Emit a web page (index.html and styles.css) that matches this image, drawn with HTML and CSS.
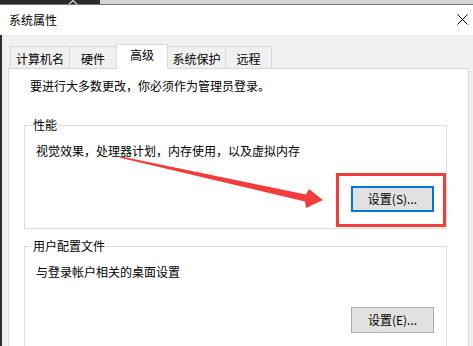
FILE: index.html
```html
<!DOCTYPE html>
<html lang="zh-CN">
<head>
<meta charset="utf-8">
<link rel="stylesheet" href="styles.css">
</head>
<body>
<div class="screen">
  <div class="topstrip">
    <div class="topstrip-dark">
      <svg class="chevron" width="14" height="6" viewBox="0 0 14 6"><polyline points="1,6 7,0.5 13,6" fill="none" stroke="#ddd" stroke-width="1.2"/></svg>
    </div>
    <div class="topstrip-light"></div>
  </div>
  <div class="titlebar">
    <span class="title">系统属性</span>
    <svg class="close" width="11" height="11" viewBox="0 0 11 11"><path d="M0.5 0.5 L10.5 10.5 M10.5 0.5 L0.5 10.5" stroke="#000" stroke-width="1"/></svg>
  </div>
  <div class="dialog">
    <div class="tabs">
      <div class="tab tab-name">计算机名</div>
      <div class="tab tab-hw">硬件</div>
      <div class="tab tab-adv active">高级</div>
      <div class="tab tab-prot">系统保护</div>
      <div class="tab tab-remote">远程</div>
    </div>
    <div class="panel">
      <p class="note">要进行大多数更改，你必须作为管理员登录。</p>
      <fieldset class="group">
        <legend class="group-label">性能</legend>
        <p class="group-text">视觉效果，处理器计划，内存使用，以及虚拟内存</p>
        <div class="btn-row"><button class="btn btn-focus">设置(S)...</button></div>
      </fieldset>
      <fieldset class="group group-profile">
        <legend class="group-label">用户配置文件</legend>
        <p class="group-text">与登录帐户相关的桌面设置</p>
        <div class="btn-row"><button class="btn">设置(E)...</button></div>
      </fieldset>
    </div>
  </div>
  <div class="highlight"></div>
  <svg class="arrow" width="473" height="346" viewBox="0 0 473 346">
    <polygon points="119,156 306,194.5 309,189 323,200 306,208 305,201.5 120,157.8" fill="#f23d3d"/>
  </svg>
</div>
</body>
</html>
```
FILE: styles.css
```css
html, body {
  margin: 0;
  padding: 0;
  background: #f0f0f0;
}
.screen {
  position: relative;
  width: 473px;
  height: 346px;
  overflow: hidden;
  font-family: "Noto Sans CJK SC", "Microsoft YaHei", sans-serif;
  font-size: 12px;
  line-height: 16px;
  color: #000;
  display: flex;
  flex-direction: column;
}
.topstrip {
  display: flex;
  height: 4px;
  border-bottom: 1px solid #7a7a7a;
  flex-shrink: 0;
}
.topstrip-dark {
  width: 100px;
  background: #2b2b2b;
  display: flex;
  align-items: flex-end;
  padding-left: 66px;
  box-sizing: border-box;
  overflow: hidden;
}
.chevron { display: block; margin-bottom: -2px; }
.topstrip-light {
  flex: 1;
  background: #d4d4d4;
}
.titlebar {
  height: 30px;
  background: #fff;
  display: flex;
  align-items: center;
  justify-content: space-between;
  padding: 0 5px 0 9px;
  flex-shrink: 0;
}
.title { margin-top: -1px; }
.close { display: block; margin-top: -1px; }
.dialog {
  flex: 1;
  background: #f0f0f0;
  border-left: 2px solid #2f2f2f;
  padding: 9px 4px 0 6px;
  display: flex;
  flex-direction: column;
}
.tabs {
  display: flex;
  align-items: flex-end;
  height: 24px;
  margin-left: 2px;
  position: relative;
  z-index: 1;
}
.tab {
  height: 22px;
  box-sizing: border-box;
  border: 1px solid #d9d9d9;
  border-bottom: none;
  background: #f0f0f0;
  text-align: center;
  line-height: 22px;
  margin-left: -1px;
  padding-top: 1px;
}
.tab-name { width: 60px; margin-left: 0; }
.tab-hw { width: 48px; }
.tab-adv { width: 52px; }
.tab-prot { width: 59px; }
.tab-remote { width: 47px; }
.tab.active {
  height: 25px;
  margin-bottom: -1px;
  background: #fff;
  line-height: 20px;
  padding-top: 0;
  position: relative;
}
.panel {
  flex: 1;
  background: #fff;
  border: 1px solid #d9d9d9;
  padding: 9px 21px 0 15px;
}
.note {
  margin: 0 0 23px 6px;
}
.group {
  border: 1px solid #dcdcdc;
  margin: 0;
  padding: 0 12px 16px 7px;
}
.group-profile {
  margin-top: 9px;
  padding-bottom: 30px;
}
.group-label {
  padding: 0 1px;
  line-height: 16px;
}
.group-text {
  margin: 10px 0 0 4px;
}
.btn-row {
  display: flex;
  justify-content: flex-end;
  margin-top: 27px;
}
.btn {
  width: 83px;
  height: 26px;
  box-sizing: border-box;
  background: #e1e1e1;
  border: 1px solid #adadad;
  font-family: inherit;
  font-size: 12px;
  line-height: 16px;
  color: #000;
  padding: 0;
}
.btn-focus {
  border: 2px solid #0078d7;
}
.highlight {
  position: absolute;
  left: 336px;
  top: 173px;
  width: 110px;
  height: 54px;
  box-sizing: border-box;
  border: 3px solid #f23d3d;
}
.arrow {
  position: absolute;
  left: 0;
  top: 0;
}
```
